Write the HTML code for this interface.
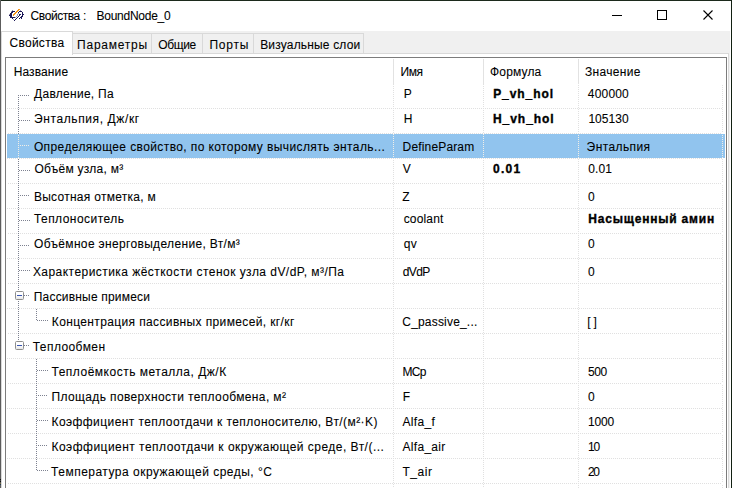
<!DOCTYPE html>
<html><head><meta charset="utf-8"><style>
html,body{margin:0;padding:0}
body{width:732px;height:488px;overflow:hidden;position:relative;background:#fff;font-family:"Liberation Sans",sans-serif}
div{position:absolute}
.t{font-size:12px;line-height:16px;white-space:nowrap;-webkit-text-stroke:0.08px currentColor}
.b{font-weight:bold;-webkit-text-stroke:0.35px currentColor}
</style></head><body>
<div style="left:0px;top:0px;width:732px;height:31px;background:#fff"></div>
<div style="left:0px;top:31px;width:732px;height:457px;background:#fff"></div>
<div style="left:1px;top:31px;width:729px;height:23px;background:#f0f0f0"></div>
<div style="left:729px;top:31px;width:1px;height:457px;background:#f0f0f0"></div>
<div style="left:0px;top:0px;width:732px;height:1px;background:#1c2a1c"></div>
<div style="left:0px;top:0px;width:1px;height:488px;background:#5c5c5c"></div>
<div style="left:731px;top:0px;width:1px;height:488px;background:#122012"></div>
<div style="left:0px;top:479px;width:1px;height:1px;background:#111"></div>
<div style="left:0px;top:480px;width:1px;height:1px;background:#444"></div>
<div style="left:0px;top:481px;width:1px;height:1px;background:#111"></div>
<div style="left:0px;top:482px;width:1px;height:1px;background:#555"></div>
<div style="left:0px;top:483px;width:1px;height:1px;background:#7a6a3a"></div>
<div style="left:0px;top:484px;width:1px;height:1px;background:#1d3a5a"></div>
<div style="left:612px;top:15px;width:10px;height:1px;background:#000"></div>
<div style="left:657px;top:10px;width:10px;height:10px;border:1px solid #000;box-sizing:border-box"></div>
<svg style="position:absolute;left:703px;top:10px" width="10" height="10" viewBox="0 0 10 10"><path d="M0.5 0.5L9.5 9.5M9.5 0.5L0.5 9.5" stroke="#000" stroke-width="1.1" fill="none"/></svg>
<svg style="position:absolute;left:0;top:0" width="32" height="32" viewBox="0 0 32 32" shape-rendering="crispEdges"><rect x="12" y="11" width="1" height="1" fill="#1b1757"/><rect x="13" y="11" width="1" height="1" fill="#1b1757"/><rect x="14" y="11" width="1" height="1" fill="#1b1757"/><rect x="11" y="12" width="1" height="1" fill="#1b1757"/><rect x="12" y="12" width="1" height="1" fill="#1b1757"/><rect x="10" y="13" width="1" height="1" fill="#1b1757"/><rect x="11" y="13" width="1" height="1" fill="#1b1757"/><rect x="10" y="14" width="1" height="1" fill="#1b1757"/><rect x="11" y="14" width="1" height="1" fill="#1b1757"/><rect x="9" y="15" width="1" height="1" fill="#1b1757"/><rect x="10" y="15" width="1" height="1" fill="#1b1757"/><rect x="11" y="15" width="1" height="1" fill="#1b1757"/><rect x="10" y="16" width="1" height="1" fill="#1b1757"/><rect x="11" y="16" width="1" height="1" fill="#1b1757"/><rect x="10" y="17" width="1" height="1" fill="#1b1757"/><rect x="11" y="17" width="1" height="1" fill="#1b1757"/><rect x="12" y="17" width="1" height="1" fill="#1b1757"/><rect x="13" y="17" width="1" height="1" fill="#1b1757"/><rect x="14" y="17" width="1" height="1" fill="#1b1757"/><rect x="12" y="18" width="1" height="1" fill="#1b1757"/><rect x="19" y="11" width="1" height="1" fill="#1b1757"/><rect x="20" y="11" width="1" height="1" fill="#1b1757"/><rect x="21" y="11" width="1" height="1" fill="#1b1757"/><rect x="18" y="12" width="1" height="1" fill="#1b1757"/><rect x="22" y="12" width="1" height="1" fill="#1b1757"/><rect x="22" y="13" width="1" height="1" fill="#1b1757"/><rect x="19" y="14" width="1" height="1" fill="#1b1757"/><rect x="20" y="14" width="1" height="1" fill="#1b1757"/><rect x="22" y="14" width="1" height="1" fill="#1b1757"/><rect x="23" y="14" width="1" height="1" fill="#1b1757"/><rect x="22" y="15" width="1" height="1" fill="#1b1757"/><rect x="21" y="16" width="1" height="1" fill="#1b1757"/><rect x="22" y="16" width="1" height="1" fill="#1b1757"/><rect x="20" y="17" width="1" height="1" fill="#1b1757"/><rect x="21" y="17" width="1" height="1" fill="#1b1757"/><rect x="19" y="18" width="1" height="1" fill="#1b1757"/><rect x="21" y="18" width="1" height="1" fill="#1b1757"/><rect x="14" y="20" width="1" height="1" fill="#1b1757"/><rect x="15" y="19" width="1" height="1" fill="#1b1757"/><rect x="16" y="18" width="1" height="1" fill="#1b1757"/><rect x="17" y="17" width="1" height="1" fill="#1b1757"/><rect x="18" y="16" width="1" height="1" fill="#1b1757"/><rect x="19" y="15" width="1" height="1" fill="#1b1757"/><rect x="15" y="17" width="1" height="1" fill="#1b1757" fill-opacity="0.45"/><rect x="16" y="16" width="1" height="1" fill="#1b1757" fill-opacity="0.45"/><rect x="17" y="15" width="1" height="1" fill="#1b1757" fill-opacity="0.45"/><rect x="17" y="14" width="1" height="1" fill="#1b1757" fill-opacity="0.45"/><rect x="18" y="13" width="1" height="1" fill="#1b1757" fill-opacity="0.45"/><rect x="13" y="19" width="1" height="1" fill="#1b1757" fill-opacity="0.45"/><rect x="12" y="10" width="1" height="1" fill="#1b1757" fill-opacity="0.45"/><rect x="20" y="10" width="1" height="1" fill="#1b1757" fill-opacity="0.45"/><rect x="11" y="11" width="1" height="1" fill="#1b1757" fill-opacity="0.45"/><rect x="9" y="14" width="1" height="1" fill="#1b1757" fill-opacity="0.45"/><rect x="13" y="14" width="1" height="1" fill="#f5941a"/><rect x="14" y="14" width="1" height="1" fill="#f5941a"/><rect x="13" y="15" width="1" height="1" fill="#f5941a"/><rect x="14" y="13" width="1" height="1" fill="#f5941a"/><rect x="15" y="13" width="1" height="1" fill="#f5941a"/><rect x="15" y="12" width="1" height="1" fill="#f5941a"/><rect x="16" y="12" width="1" height="1" fill="#f5941a"/><rect x="16" y="11" width="1" height="1" fill="#f5941a"/><rect x="17" y="11" width="1" height="1" fill="#f5941a"/><rect x="17" y="10" width="1" height="1" fill="#f5941a"/><rect x="18" y="10" width="1" height="1" fill="#f5941a"/><rect x="18" y="9" width="1" height="1" fill="#f5941a"/><rect x="19" y="9" width="1" height="1" fill="#f5941a"/></svg>
<div style="left:1px;top:53px;width:728px;height:1px;background:#d9d9d9"></div>
<div style="left:1px;top:53px;width:1px;height:435px;background:#d9d9d9"></div>
<div style="left:728px;top:53px;width:1px;height:435px;background:#d9d9d9"></div>
<div style="left:2px;top:54px;width:726px;height:434px;background:#fff"></div>
<div style="left:1px;top:31px;width:72px;height:23px;background:#fff;border:1px solid #d9d9d9;border-bottom:none;box-sizing:border-box"></div>
<div style="left:72px;top:33px;width:80px;height:21px;background:#f0f0f0;border:1px solid #d9d9d9;box-sizing:border-box"></div>
<div style="left:151px;top:33px;width:52px;height:21px;background:#f0f0f0;border:1px solid #d9d9d9;box-sizing:border-box"></div>
<div style="left:202px;top:33px;width:52px;height:21px;background:#f0f0f0;border:1px solid #d9d9d9;box-sizing:border-box"></div>
<div style="left:253px;top:33px;width:111px;height:21px;background:#f0f0f0;border:1px solid #d9d9d9;box-sizing:border-box"></div>
<div style="left:1px;top:31px;width:72px;height:24px;background:#fff;border:1px solid #d9d9d9;border-bottom:none;box-sizing:border-box"></div>
<div style="left:5px;top:57px;width:722px;height:431px;border:1px solid #7c7c7c;border-bottom:none;box-sizing:border-box;background:#fff"></div>
<div style="left:393px;top:59px;width:1px;height:25px;background:#e2e2e2"></div>
<div style="left:483px;top:59px;width:1px;height:25px;background:#e2e2e2"></div>
<div style="left:578px;top:59px;width:1px;height:25px;background:#e2e2e2"></div>
<div style="left:7px;top:108px;width:715px;height:1px;background:repeating-linear-gradient(90deg,#e0e0e0 0 1px,transparent 1px 2px)"></div>
<div style="left:393px;top:84px;width:1px;height:24px;background:repeating-linear-gradient(180deg,#e0e0e0 0 1px,transparent 1px 2px)"></div>
<div style="left:483px;top:84px;width:1px;height:24px;background:repeating-linear-gradient(180deg,#e0e0e0 0 1px,transparent 1px 2px)"></div>
<div style="left:578px;top:85px;width:1px;height:23px;background:repeating-linear-gradient(180deg,#e0e0e0 0 1px,transparent 1px 2px)"></div>
<div style="left:722px;top:85px;width:1px;height:23px;background:repeating-linear-gradient(180deg,#e0e0e0 0 1px,transparent 1px 2px)"></div>
<div style="left:18px;top:95px;width:1px;height:14px;background:repeating-linear-gradient(180deg,#7d8190 0 1px,transparent 1px 2px)"></div>
<div style="left:18px;top:95px;width:12px;height:1px;background:repeating-linear-gradient(90deg,#7d8190 0 1px,transparent 1px 2px)"></div>
<div style="left:8px;top:133px;width:714px;height:1px;background:repeating-linear-gradient(90deg,#e0e0e0 0 1px,transparent 1px 2px)"></div>
<div style="left:393px;top:110px;width:1px;height:23px;background:repeating-linear-gradient(180deg,#e0e0e0 0 1px,transparent 1px 2px)"></div>
<div style="left:483px;top:110px;width:1px;height:23px;background:repeating-linear-gradient(180deg,#e0e0e0 0 1px,transparent 1px 2px)"></div>
<div style="left:578px;top:109px;width:1px;height:24px;background:repeating-linear-gradient(180deg,#e0e0e0 0 1px,transparent 1px 2px)"></div>
<div style="left:722px;top:109px;width:1px;height:24px;background:repeating-linear-gradient(180deg,#e0e0e0 0 1px,transparent 1px 2px)"></div>
<div style="left:18px;top:109px;width:1px;height:25px;background:repeating-linear-gradient(180deg,#7d8190 0 1px,transparent 1px 2px)"></div>
<div style="left:19px;top:120px;width:11px;height:1px;background:repeating-linear-gradient(90deg,#7d8190 0 1px,transparent 1px 2px)"></div>
<div style="left:7px;top:134px;width:718px;height:24px;background:#91c4ee"></div>
<div style="left:7px;top:158px;width:715px;height:1px;background:repeating-linear-gradient(90deg,#e0e0e0 0 1px,transparent 1px 2px)"></div>
<div style="left:393px;top:134px;width:1px;height:24px;background:repeating-linear-gradient(180deg,#f2eee6 0 1px,transparent 1px 2px)"></div>
<div style="left:483px;top:134px;width:1px;height:24px;background:repeating-linear-gradient(180deg,#f2eee6 0 1px,transparent 1px 2px)"></div>
<div style="left:578px;top:135px;width:1px;height:23px;background:repeating-linear-gradient(180deg,#f2eee6 0 1px,transparent 1px 2px)"></div>
<div style="left:722px;top:135px;width:1px;height:23px;background:repeating-linear-gradient(180deg,#f2eee6 0 1px,transparent 1px 2px)"></div>
<div style="left:18px;top:135px;width:1px;height:24px;background:repeating-linear-gradient(180deg,#f2eee6 0 1px,transparent 1px 2px)"></div>
<div style="left:18px;top:145px;width:12px;height:1px;background:repeating-linear-gradient(90deg,#f2eee6 0 1px,transparent 1px 2px)"></div>
<div style="left:8px;top:183px;width:714px;height:1px;background:repeating-linear-gradient(90deg,#e0e0e0 0 1px,transparent 1px 2px)"></div>
<div style="left:393px;top:160px;width:1px;height:23px;background:repeating-linear-gradient(180deg,#e0e0e0 0 1px,transparent 1px 2px)"></div>
<div style="left:483px;top:160px;width:1px;height:23px;background:repeating-linear-gradient(180deg,#e0e0e0 0 1px,transparent 1px 2px)"></div>
<div style="left:578px;top:159px;width:1px;height:24px;background:repeating-linear-gradient(180deg,#e0e0e0 0 1px,transparent 1px 2px)"></div>
<div style="left:722px;top:159px;width:1px;height:24px;background:repeating-linear-gradient(180deg,#e0e0e0 0 1px,transparent 1px 2px)"></div>
<div style="left:18px;top:159px;width:1px;height:25px;background:repeating-linear-gradient(180deg,#7d8190 0 1px,transparent 1px 2px)"></div>
<div style="left:19px;top:170px;width:11px;height:1px;background:repeating-linear-gradient(90deg,#7d8190 0 1px,transparent 1px 2px)"></div>
<div style="left:7px;top:208px;width:715px;height:1px;background:repeating-linear-gradient(90deg,#e0e0e0 0 1px,transparent 1px 2px)"></div>
<div style="left:393px;top:184px;width:1px;height:24px;background:repeating-linear-gradient(180deg,#e0e0e0 0 1px,transparent 1px 2px)"></div>
<div style="left:483px;top:184px;width:1px;height:24px;background:repeating-linear-gradient(180deg,#e0e0e0 0 1px,transparent 1px 2px)"></div>
<div style="left:578px;top:185px;width:1px;height:23px;background:repeating-linear-gradient(180deg,#e0e0e0 0 1px,transparent 1px 2px)"></div>
<div style="left:722px;top:185px;width:1px;height:23px;background:repeating-linear-gradient(180deg,#e0e0e0 0 1px,transparent 1px 2px)"></div>
<div style="left:18px;top:185px;width:1px;height:24px;background:repeating-linear-gradient(180deg,#7d8190 0 1px,transparent 1px 2px)"></div>
<div style="left:18px;top:195px;width:12px;height:1px;background:repeating-linear-gradient(90deg,#7d8190 0 1px,transparent 1px 2px)"></div>
<div style="left:8px;top:233px;width:714px;height:1px;background:repeating-linear-gradient(90deg,#e0e0e0 0 1px,transparent 1px 2px)"></div>
<div style="left:393px;top:210px;width:1px;height:23px;background:repeating-linear-gradient(180deg,#e0e0e0 0 1px,transparent 1px 2px)"></div>
<div style="left:483px;top:210px;width:1px;height:23px;background:repeating-linear-gradient(180deg,#e0e0e0 0 1px,transparent 1px 2px)"></div>
<div style="left:578px;top:209px;width:1px;height:24px;background:repeating-linear-gradient(180deg,#e0e0e0 0 1px,transparent 1px 2px)"></div>
<div style="left:722px;top:209px;width:1px;height:24px;background:repeating-linear-gradient(180deg,#e0e0e0 0 1px,transparent 1px 2px)"></div>
<div style="left:18px;top:209px;width:1px;height:25px;background:repeating-linear-gradient(180deg,#7d8190 0 1px,transparent 1px 2px)"></div>
<div style="left:19px;top:220px;width:11px;height:1px;background:repeating-linear-gradient(90deg,#7d8190 0 1px,transparent 1px 2px)"></div>
<div style="left:7px;top:258px;width:715px;height:1px;background:repeating-linear-gradient(90deg,#e0e0e0 0 1px,transparent 1px 2px)"></div>
<div style="left:393px;top:234px;width:1px;height:24px;background:repeating-linear-gradient(180deg,#e0e0e0 0 1px,transparent 1px 2px)"></div>
<div style="left:483px;top:234px;width:1px;height:24px;background:repeating-linear-gradient(180deg,#e0e0e0 0 1px,transparent 1px 2px)"></div>
<div style="left:578px;top:235px;width:1px;height:23px;background:repeating-linear-gradient(180deg,#e0e0e0 0 1px,transparent 1px 2px)"></div>
<div style="left:722px;top:235px;width:1px;height:23px;background:repeating-linear-gradient(180deg,#e0e0e0 0 1px,transparent 1px 2px)"></div>
<div style="left:18px;top:235px;width:1px;height:24px;background:repeating-linear-gradient(180deg,#7d8190 0 1px,transparent 1px 2px)"></div>
<div style="left:18px;top:245px;width:12px;height:1px;background:repeating-linear-gradient(90deg,#7d8190 0 1px,transparent 1px 2px)"></div>
<div style="left:8px;top:283px;width:714px;height:1px;background:repeating-linear-gradient(90deg,#e0e0e0 0 1px,transparent 1px 2px)"></div>
<div style="left:393px;top:260px;width:1px;height:23px;background:repeating-linear-gradient(180deg,#e0e0e0 0 1px,transparent 1px 2px)"></div>
<div style="left:483px;top:260px;width:1px;height:23px;background:repeating-linear-gradient(180deg,#e0e0e0 0 1px,transparent 1px 2px)"></div>
<div style="left:578px;top:259px;width:1px;height:24px;background:repeating-linear-gradient(180deg,#e0e0e0 0 1px,transparent 1px 2px)"></div>
<div style="left:722px;top:259px;width:1px;height:24px;background:repeating-linear-gradient(180deg,#e0e0e0 0 1px,transparent 1px 2px)"></div>
<div style="left:18px;top:259px;width:1px;height:25px;background:repeating-linear-gradient(180deg,#7d8190 0 1px,transparent 1px 2px)"></div>
<div style="left:19px;top:270px;width:11px;height:1px;background:repeating-linear-gradient(90deg,#7d8190 0 1px,transparent 1px 2px)"></div>
<div style="left:7px;top:308px;width:715px;height:1px;background:repeating-linear-gradient(90deg,#e0e0e0 0 1px,transparent 1px 2px)"></div>
<div style="left:393px;top:284px;width:1px;height:24px;background:repeating-linear-gradient(180deg,#e0e0e0 0 1px,transparent 1px 2px)"></div>
<div style="left:483px;top:284px;width:1px;height:24px;background:repeating-linear-gradient(180deg,#e0e0e0 0 1px,transparent 1px 2px)"></div>
<div style="left:578px;top:285px;width:1px;height:23px;background:repeating-linear-gradient(180deg,#e0e0e0 0 1px,transparent 1px 2px)"></div>
<div style="left:722px;top:285px;width:1px;height:23px;background:repeating-linear-gradient(180deg,#e0e0e0 0 1px,transparent 1px 2px)"></div>
<div style="left:18px;top:285px;width:1px;height:6px;background:repeating-linear-gradient(180deg,#7d8190 0 1px,transparent 1px 2px)"></div>
<div style="left:18px;top:301px;width:1px;height:8px;background:repeating-linear-gradient(180deg,#7d8190 0 1px,transparent 1px 2px)"></div>
<div style="left:15px;top:291px;width:9px;height:9px;border:1px solid #8e8e8e;border-radius:1.5px;box-sizing:border-box;background:linear-gradient(#fff 0 45%,#e6e6e6 100%)"></div>
<div style="left:17px;top:295px;width:5px;height:1px;background:#3a56b0"></div>
<div style="left:24px;top:295px;width:6px;height:1px;background:repeating-linear-gradient(90deg,#7d8190 0 1px,transparent 1px 2px)"></div>
<div style="left:8px;top:333px;width:714px;height:1px;background:repeating-linear-gradient(90deg,#e0e0e0 0 1px,transparent 1px 2px)"></div>
<div style="left:393px;top:310px;width:1px;height:23px;background:repeating-linear-gradient(180deg,#e0e0e0 0 1px,transparent 1px 2px)"></div>
<div style="left:483px;top:310px;width:1px;height:23px;background:repeating-linear-gradient(180deg,#e0e0e0 0 1px,transparent 1px 2px)"></div>
<div style="left:578px;top:309px;width:1px;height:24px;background:repeating-linear-gradient(180deg,#e0e0e0 0 1px,transparent 1px 2px)"></div>
<div style="left:722px;top:309px;width:1px;height:24px;background:repeating-linear-gradient(180deg,#e0e0e0 0 1px,transparent 1px 2px)"></div>
<div style="left:18px;top:309px;width:1px;height:25px;background:repeating-linear-gradient(180deg,#7d8190 0 1px,transparent 1px 2px)"></div>
<div style="left:36px;top:309px;width:1px;height:12px;background:repeating-linear-gradient(180deg,#7d8190 0 1px,transparent 1px 2px)"></div>
<div style="left:37px;top:320px;width:11px;height:1px;background:repeating-linear-gradient(90deg,#7d8190 0 1px,transparent 1px 2px)"></div>
<div style="left:7px;top:358px;width:715px;height:1px;background:repeating-linear-gradient(90deg,#e0e0e0 0 1px,transparent 1px 2px)"></div>
<div style="left:393px;top:334px;width:1px;height:24px;background:repeating-linear-gradient(180deg,#e0e0e0 0 1px,transparent 1px 2px)"></div>
<div style="left:483px;top:334px;width:1px;height:24px;background:repeating-linear-gradient(180deg,#e0e0e0 0 1px,transparent 1px 2px)"></div>
<div style="left:578px;top:335px;width:1px;height:23px;background:repeating-linear-gradient(180deg,#e0e0e0 0 1px,transparent 1px 2px)"></div>
<div style="left:722px;top:335px;width:1px;height:23px;background:repeating-linear-gradient(180deg,#e0e0e0 0 1px,transparent 1px 2px)"></div>
<div style="left:18px;top:335px;width:1px;height:6px;background:repeating-linear-gradient(180deg,#7d8190 0 1px,transparent 1px 2px)"></div>
<div style="left:15px;top:341px;width:9px;height:9px;border:1px solid #8e8e8e;border-radius:1.5px;box-sizing:border-box;background:linear-gradient(#fff 0 45%,#e6e6e6 100%)"></div>
<div style="left:17px;top:345px;width:5px;height:1px;background:#3a56b0"></div>
<div style="left:24px;top:345px;width:6px;height:1px;background:repeating-linear-gradient(90deg,#7d8190 0 1px,transparent 1px 2px)"></div>
<div style="left:8px;top:383px;width:714px;height:1px;background:repeating-linear-gradient(90deg,#e0e0e0 0 1px,transparent 1px 2px)"></div>
<div style="left:393px;top:360px;width:1px;height:23px;background:repeating-linear-gradient(180deg,#e0e0e0 0 1px,transparent 1px 2px)"></div>
<div style="left:483px;top:360px;width:1px;height:23px;background:repeating-linear-gradient(180deg,#e0e0e0 0 1px,transparent 1px 2px)"></div>
<div style="left:578px;top:359px;width:1px;height:24px;background:repeating-linear-gradient(180deg,#e0e0e0 0 1px,transparent 1px 2px)"></div>
<div style="left:722px;top:359px;width:1px;height:24px;background:repeating-linear-gradient(180deg,#e0e0e0 0 1px,transparent 1px 2px)"></div>
<div style="left:36px;top:359px;width:1px;height:25px;background:repeating-linear-gradient(180deg,#7d8190 0 1px,transparent 1px 2px)"></div>
<div style="left:37px;top:370px;width:11px;height:1px;background:repeating-linear-gradient(90deg,#7d8190 0 1px,transparent 1px 2px)"></div>
<div style="left:7px;top:408px;width:715px;height:1px;background:repeating-linear-gradient(90deg,#e0e0e0 0 1px,transparent 1px 2px)"></div>
<div style="left:393px;top:384px;width:1px;height:24px;background:repeating-linear-gradient(180deg,#e0e0e0 0 1px,transparent 1px 2px)"></div>
<div style="left:483px;top:384px;width:1px;height:24px;background:repeating-linear-gradient(180deg,#e0e0e0 0 1px,transparent 1px 2px)"></div>
<div style="left:578px;top:385px;width:1px;height:23px;background:repeating-linear-gradient(180deg,#e0e0e0 0 1px,transparent 1px 2px)"></div>
<div style="left:722px;top:385px;width:1px;height:23px;background:repeating-linear-gradient(180deg,#e0e0e0 0 1px,transparent 1px 2px)"></div>
<div style="left:36px;top:385px;width:1px;height:24px;background:repeating-linear-gradient(180deg,#7d8190 0 1px,transparent 1px 2px)"></div>
<div style="left:36px;top:395px;width:12px;height:1px;background:repeating-linear-gradient(90deg,#7d8190 0 1px,transparent 1px 2px)"></div>
<div style="left:8px;top:433px;width:714px;height:1px;background:repeating-linear-gradient(90deg,#e0e0e0 0 1px,transparent 1px 2px)"></div>
<div style="left:393px;top:410px;width:1px;height:23px;background:repeating-linear-gradient(180deg,#e0e0e0 0 1px,transparent 1px 2px)"></div>
<div style="left:483px;top:410px;width:1px;height:23px;background:repeating-linear-gradient(180deg,#e0e0e0 0 1px,transparent 1px 2px)"></div>
<div style="left:578px;top:409px;width:1px;height:24px;background:repeating-linear-gradient(180deg,#e0e0e0 0 1px,transparent 1px 2px)"></div>
<div style="left:722px;top:409px;width:1px;height:24px;background:repeating-linear-gradient(180deg,#e0e0e0 0 1px,transparent 1px 2px)"></div>
<div style="left:36px;top:409px;width:1px;height:25px;background:repeating-linear-gradient(180deg,#7d8190 0 1px,transparent 1px 2px)"></div>
<div style="left:37px;top:420px;width:11px;height:1px;background:repeating-linear-gradient(90deg,#7d8190 0 1px,transparent 1px 2px)"></div>
<div style="left:7px;top:458px;width:715px;height:1px;background:repeating-linear-gradient(90deg,#e0e0e0 0 1px,transparent 1px 2px)"></div>
<div style="left:393px;top:434px;width:1px;height:24px;background:repeating-linear-gradient(180deg,#e0e0e0 0 1px,transparent 1px 2px)"></div>
<div style="left:483px;top:434px;width:1px;height:24px;background:repeating-linear-gradient(180deg,#e0e0e0 0 1px,transparent 1px 2px)"></div>
<div style="left:578px;top:435px;width:1px;height:23px;background:repeating-linear-gradient(180deg,#e0e0e0 0 1px,transparent 1px 2px)"></div>
<div style="left:722px;top:435px;width:1px;height:23px;background:repeating-linear-gradient(180deg,#e0e0e0 0 1px,transparent 1px 2px)"></div>
<div style="left:36px;top:435px;width:1px;height:24px;background:repeating-linear-gradient(180deg,#7d8190 0 1px,transparent 1px 2px)"></div>
<div style="left:36px;top:445px;width:12px;height:1px;background:repeating-linear-gradient(90deg,#7d8190 0 1px,transparent 1px 2px)"></div>
<div style="left:8px;top:483px;width:714px;height:1px;background:repeating-linear-gradient(90deg,#e0e0e0 0 1px,transparent 1px 2px)"></div>
<div style="left:393px;top:460px;width:1px;height:23px;background:repeating-linear-gradient(180deg,#e0e0e0 0 1px,transparent 1px 2px)"></div>
<div style="left:483px;top:460px;width:1px;height:23px;background:repeating-linear-gradient(180deg,#e0e0e0 0 1px,transparent 1px 2px)"></div>
<div style="left:578px;top:459px;width:1px;height:24px;background:repeating-linear-gradient(180deg,#e0e0e0 0 1px,transparent 1px 2px)"></div>
<div style="left:722px;top:459px;width:1px;height:24px;background:repeating-linear-gradient(180deg,#e0e0e0 0 1px,transparent 1px 2px)"></div>
<div style="left:36px;top:459px;width:1px;height:12px;background:repeating-linear-gradient(180deg,#7d8190 0 1px,transparent 1px 2px)"></div>
<div style="left:37px;top:470px;width:11px;height:1px;background:repeating-linear-gradient(90deg,#7d8190 0 1px,transparent 1px 2px)"></div>
<div style="left:393px;top:484px;width:1px;height:4px;background:repeating-linear-gradient(180deg,#e0e0e0 0 1px,transparent 1px 2px)"></div>
<div style="left:483px;top:484px;width:1px;height:4px;background:repeating-linear-gradient(180deg,#e0e0e0 0 1px,transparent 1px 2px)"></div>
<div style="left:578px;top:485px;width:1px;height:3px;background:repeating-linear-gradient(180deg,#e0e0e0 0 1px,transparent 1px 2px)"></div>
<div style="left:722px;top:485px;width:1px;height:3px;background:repeating-linear-gradient(180deg,#e0e0e0 0 1px,transparent 1px 2px)"></div>
<div class="t" style="left:30.60px;top:8px;letter-spacing:-0.431px;color:#000">Свойства</div>
<div class="t" style="left:83.00px;top:8px;letter-spacing:0.000px;color:#000">:</div>
<div class="t" style="left:96.50px;top:8px;letter-spacing:-0.256px;color:#000">BoundNode_0</div>
<div class="t" style="left:9.50px;top:35px;letter-spacing:0.269px;color:#000">Свойства</div>
<div class="t" style="left:77.10px;top:37px;letter-spacing:0.745px;color:#000">Параметры</div>
<div class="t" style="left:158.30px;top:37px;letter-spacing:-0.371px;color:#000">Общие</div>
<div class="t" style="left:209.40px;top:37px;letter-spacing:0.774px;color:#000">Порты</div>
<div class="t" style="left:260.20px;top:37px;letter-spacing:0.169px;color:#000">Визуальные слои</div>
<div class="t" style="left:13.70px;top:64px;letter-spacing:0.107px;color:#000">Название</div>
<div class="t" style="left:400.60px;top:64px;letter-spacing:-0.488px;color:#000">Имя</div>
<div class="t" style="left:490.10px;top:64px;letter-spacing:0.151px;color:#000">Формула</div>
<div class="t" style="left:584.90px;top:64px;letter-spacing:0.323px;color:#000">Значение</div>
<div class="t" style="left:34.10px;top:86px;letter-spacing:0.275px;color:#000">Давление, Па</div>
<div class="t" style="left:403.80px;top:86px;letter-spacing:0.400px;color:#000">P</div>
<div class="t b" style="left:493.20px;top:86px;letter-spacing:0.926px;color:#000">P_vh_hol</div>
<div class="t" style="left:587.80px;top:86px;letter-spacing:0.186px;color:#000">400000</div>
<div class="t" style="left:34.00px;top:111px;letter-spacing:0.610px;color:#000">Энтальпия, Дж/кг</div>
<div class="t" style="left:403.80px;top:111px;letter-spacing:0.400px;color:#000">H</div>
<div class="t b" style="left:493.00px;top:111px;letter-spacing:0.946px;color:#000">H_vh_hol</div>
<div class="t" style="left:588.40px;top:111px;letter-spacing:0.046px;color:#000">105130</div>
<div class="t" style="left:33.90px;top:139px;letter-spacing:0.397px;color:#000">Определяющее свойство, по которому вычислять энталь...</div>
<div class="t" style="left:402.60px;top:139px;letter-spacing:0.156px;color:#000">DefineParam</div>
<div class="t" style="left:586.60px;top:139px;letter-spacing:0.407px;color:#000">Энтальпия</div>
<div class="t" style="left:34.40px;top:161px;letter-spacing:0.252px;color:#000">Объём узла, м³</div>
<div class="t" style="left:402.80px;top:161px;letter-spacing:0.400px;color:#000">V</div>
<div class="t b" style="left:493.00px;top:161px;letter-spacing:1.273px;color:#000">0.01</div>
<div class="t" style="left:588.30px;top:161px;letter-spacing:0.073px;color:#000">0.01</div>
<div class="t" style="left:33.90px;top:189px;letter-spacing:0.279px;color:#000">Высотная отметка, м</div>
<div class="t" style="left:402.20px;top:189px;letter-spacing:0.400px;color:#000">Z</div>
<div class="t" style="left:588.00px;top:189px;letter-spacing:0.400px;color:#000">0</div>
<div class="t" style="left:33.90px;top:211px;letter-spacing:0.468px;color:#000">Теплоноситель</div>
<div class="t" style="left:403.70px;top:211px;letter-spacing:0.156px;color:#000">coolant</div>
<div class="t b" style="left:588.30px;top:211px;letter-spacing:0.797px;color:#000">Насыщенный амин</div>
<div class="t" style="left:34.00px;top:236px;letter-spacing:0.335px;color:#000">Объёмное энерговыделение, Вт/м³</div>
<div class="t" style="left:403.70px;top:236px;letter-spacing:0.400px;color:#000">qv</div>
<div class="t" style="left:588.00px;top:236px;letter-spacing:0.400px;color:#000">0</div>
<div class="t" style="left:32.90px;top:264px;letter-spacing:0.453px;color:#000">Характеристика жёсткости стенок узла dV/dP, м³/Па</div>
<div class="t" style="left:402.80px;top:264px;letter-spacing:-0.651px;color:#000">dVdP</div>
<div class="t" style="left:588.00px;top:264px;letter-spacing:0.400px;color:#000">0</div>
<div class="t" style="left:33.80px;top:289px;letter-spacing:0.185px;color:#000">Пассивные примеси</div>
<div class="t" style="left:51.80px;top:314px;letter-spacing:0.368px;color:#000">Концентрация пассивных примесей, кг/кг</div>
<div class="t" style="left:402.30px;top:314px;letter-spacing:0.186px;color:#000">C_passive_...</div>
<div class="t" style="left:587.30px;top:314px;letter-spacing:2.966px;color:#000">[]</div>
<div class="t" style="left:32.80px;top:339px;letter-spacing:0.417px;color:#000">Теплообмен</div>
<div class="t" style="left:51.50px;top:364px;letter-spacing:0.504px;color:#000">Теплоёмкость металла, Дж/К</div>
<div class="t" style="left:402.50px;top:364px;letter-spacing:-0.731px;color:#000">MCp</div>
<div class="t" style="left:588.00px;top:364px;letter-spacing:-0.474px;color:#000">500</div>
<div class="t" style="left:51.50px;top:389px;letter-spacing:0.371px;color:#000">Площадь поверхности теплообмена, м²</div>
<div class="t" style="left:402.80px;top:389px;letter-spacing:0.400px;color:#000">F</div>
<div class="t" style="left:588.00px;top:389px;letter-spacing:0.400px;color:#000">0</div>
<div class="t" style="left:51.50px;top:414px;letter-spacing:0.418px;color:#000">Коэффициент теплоотдачи к теплоносителю, Вт/(м²·K)</div>
<div class="t" style="left:402.50px;top:414px;letter-spacing:0.350px;color:#000">Alfa_f</div>
<div class="t" style="left:588.00px;top:414px;letter-spacing:-0.174px;color:#000">1000</div>
<div class="t" style="left:51.50px;top:439px;letter-spacing:0.473px;color:#000">Коэффициент теплоотдачи к окружающей среде, Вт/(...</div>
<div class="t" style="left:402.50px;top:439px;letter-spacing:0.301px;color:#000">Alfa_air</div>
<div class="t" style="left:588.00px;top:439px;letter-spacing:-1.074px;color:#000">10</div>
<div class="t" style="left:51.10px;top:464px;letter-spacing:0.492px;color:#000">Температура окружающей среды, °C</div>
<div class="t" style="left:402.50px;top:464px;letter-spacing:0.539px;color:#000">T_air</div>
<div class="t" style="left:588.00px;top:464px;letter-spacing:-1.474px;color:#000">20</div>
</body></html>
